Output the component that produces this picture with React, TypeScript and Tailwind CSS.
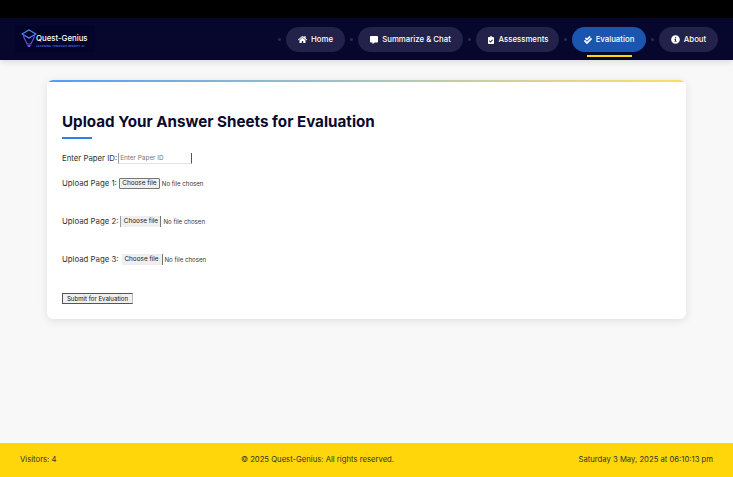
import { FaHome, FaCommentAlt, FaClipboardCheck, FaCheckDouble, FaInfoCircle } from "react-icons/fa";
import React from "react";

const F = { fontFamily: "Inter, sans-serif" };

function Dot() {
  return <span className="w-[3px] h-[3px] rounded-full bg-[#2c2c4c] shrink-0" />;
}

function Pill({ w, icon, label, active }: { w: string; icon: React.ReactNode; label: string; active?: boolean }) {
  return (
    <div className={`relative h-[25px] rounded-full flex items-center justify-center gap-[4px] text-white text-[7.8px] font-medium pt-[1px] ${w} ${active ? "bg-[#1a56b0]" : "bg-[#22224a]"}`}>
      {icon}
      <span>{label}</span>
      {active && <span className="absolute left-[15px] top-[28px] w-[45px] h-[2px] bg-[#ffd60a]" />}
    </div>
  );
}

function Logo() {
  return (
    <div className="w-[80px] h-[26px] bg-[#04042a] relative flex shrink-0">
      <svg width="16" height="19" viewBox="0 0 16 19" className="ml-[6px] mt-[3px]" fill="none">
        <path d="M1 5 L8 1 L15 5 L8 9 Z" stroke="#4f8cf5" strokeWidth="1.1" />
        <path d="M2.5 6 C2.5 10 5 11 6 15 H10 C11 11 13.5 10 13.5 6" stroke="#6a4cf0" strokeWidth="1.1" />
        <path d="M6 16 H10 L9 18 H7 Z" fill="#6a4cf0" />
      </svg>
      <div className="-ml-[1px] mt-[8px] flex flex-col">
        <span className="text-white text-[7.8px] leading-[9px] font-medium whitespace-nowrap" style={{ fontFamily: "Inter, sans-serif" }}>Quest-Genius</span>
        <span className="text-[#4f6cf0] text-[2.6px] leading-[3px] mt-[2px] tracking-[0.25px] whitespace-nowrap font-bold">LEARNING THROUGH INSIGHT AI</span>
      </div>
    </div>
  );
}

function FileRow({ label, border, ml, mt }: { label: string; border: string; ml: string; mt: string }) {
  return (
    <div className={`flex items-center h-[12px] ${mt}`}>
      <label className="text-[7.8px] text-[#333] whitespace-nowrap">{label}</label>
      <button type="button" className={`h-[11px] w-[41px] text-[6.4px] leading-[9px] text-[#222] bg-[#efefef] whitespace-nowrap ${border} ${ml}`}>Choose file</button>
      <span className="ml-[2px] text-[6.1px] text-[#333] whitespace-nowrap">No file chosen</span>
    </div>
  );
}

export default function App() {
  return (
    <div className="w-[733px] h-[477px] flex flex-col bg-[#f8f8f8] overflow-hidden" style={F}>
      <div className="h-[18px] bg-black shrink-0" />
      <header className="h-[42px] shrink-0 bg-[#07072e] flex items-center justify-between px-[15px] shadow-[0_2px_6px_rgba(0,0,0,0.12)]">
        <Logo />
        <nav className="flex items-center gap-[5px]">
          <Dot />
          <Pill w="w-[59px]" icon={<FaHome size={9} />} label="Home" />
          <Dot />
          <Pill w="w-[105px]" icon={<FaCommentAlt size={8} />} label="Summarize & Chat" />
          <Dot />
          <Pill w="w-[83px]" icon={<FaClipboardCheck size={8} />} label="Assessments" />
          <Dot />
          <Pill w="w-[74px]" active icon={<FaCheckDouble size={8} />} label="Evaluation" />
          <Dot />
          <Pill w="w-[59px]" icon={<FaInfoCircle size={9} />} label="About" />
        </nav>
      </header>
      <main className="flex-1 pt-[20px] px-[47px]">
        <section className="relative h-[239px] bg-white rounded-[6px] shadow-[0_2px_8px_rgba(0,0,0,0.1)] overflow-hidden pt-[32px] px-[15px]">
          <div className="absolute left-0 right-0 top-0 h-[2px] bg-gradient-to-r from-[#4d9df8] to-[#ffdf5a]" />
          <h1 className="text-[15.2px] leading-[20px] font-bold text-[#0a0a2e] whitespace-nowrap">Upload Your Answer Sheets for Evaluation</h1>
          <div className="w-[30px] h-[1.5px] bg-[#2f7fe8] mt-[5px]" />
          <div className="flex items-center h-[12px] mt-[14px]">
            <label className="text-[7.8px] text-[#333] whitespace-nowrap">Enter Paper ID:</label>
            <input placeholder="Enter Paper ID" className="ml-[1px] w-[74px] h-[11px] px-[1px] text-[6.4px] border-l border-r border-b border-l-[#999] border-r-[#555] border-b-[#e4e4e4] outline-none placeholder:text-[#777]" />
          </div>
          <FileRow label="Upload Page 1:" border="border border-[#767676] rounded-[1px]" ml="ml-[2px]" mt="mt-[13px]" />
          <FileRow label="Upload Page 2:" border="border-l border-r border-l-[#999] border-r-[#767676]" ml="ml-[2px]" mt="mt-[26px]" />
          <FileRow label="Upload Page 3:" border="border-r border-r-[#767676]" ml="ml-[3px]" mt="mt-[26px]" />
          <button type="button" className="block mt-[27px] w-[71px] h-[11px] text-[6.1px] leading-[9px] text-[#111] bg-[#efefef] border border-[#555] border-r-[#bbb] whitespace-nowrap">Submit for Evaluation</button>
        </section>
      </main>
      <footer className="h-[34px] shrink-0 bg-[#ffd60a] flex items-center justify-between px-[20px] text-[7.7px] text-[#333]">
        <span>Visitors: 4</span>
        <span>© 2025 Quest-Genius: All rights reserved.</span>
        <span>Saturday 3 May, 2025 at 06:10:13 pm</span>
      </footer>
    </div>
  );
}
